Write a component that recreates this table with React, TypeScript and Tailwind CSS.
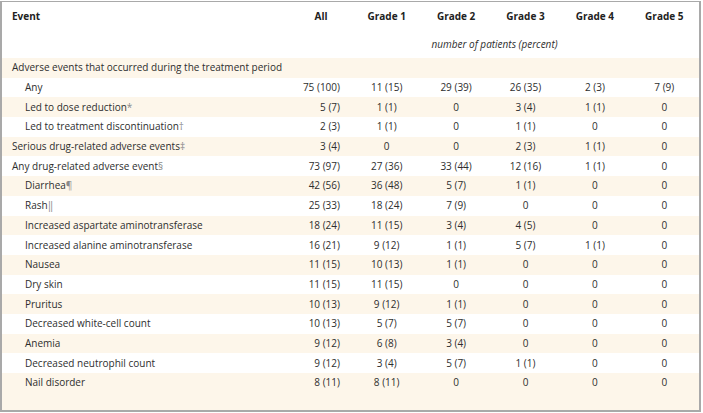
type Row = {
  label: string
  mark?: string
  indent?: boolean
  section?: boolean
  values?: string[]
}

const rows: Row[] = [
  { label: 'Adverse events that occurred during the treatment period', section: true },
  { label: 'Any', indent: true, values: ['75 (100)', '11 (15)', '29 (39)', '26 (35)', '2 (3)', '7 (9)'] },
  { label: 'Led to dose reduction', mark: '*', indent: true, values: ['5 (7)', '1 (1)', '0', '3 (4)', '1 (1)', '0'] },
  { label: 'Led to treatment discontinuation', mark: '†', indent: true, values: ['2 (3)', '1 (1)', '0', '1 (1)', '0', '0'] },
  { label: 'Serious drug-related adverse events', mark: '‡', values: ['3 (4)', '0', '0', '2 (3)', '1 (1)', '0'] },
  { label: 'Any drug-related adverse event', mark: '§', values: ['73 (97)', '27 (36)', '33 (44)', '12 (16)', '1 (1)', '0'] },
  { label: 'Diarrhea', mark: '¶', indent: true, values: ['42 (56)', '36 (48)', '5 (7)', '1 (1)', '0', '0'] },
  { label: 'Rash', mark: '‖', indent: true, values: ['25 (33)', '18 (24)', '7 (9)', '0', '0', '0'] },
  { label: 'Increased aspartate aminotransferase', indent: true, values: ['18 (24)', '11 (15)', '3 (4)', '4 (5)', '0', '0'] },
  { label: 'Increased alanine aminotransferase', indent: true, values: ['16 (21)', '9 (12)', '1 (1)', '5 (7)', '1 (1)', '0'] },
  { label: 'Nausea', indent: true, values: ['11 (15)', '10 (13)', '1 (1)', '0', '0', '0'] },
  { label: 'Dry skin', indent: true, values: ['11 (15)', '11 (15)', '0', '0', '0', '0'] },
  { label: 'Pruritus', indent: true, values: ['10 (13)', '9 (12)', '1 (1)', '0', '0', '0'] },
  { label: 'Decreased white-cell count', indent: true, values: ['10 (13)', '5 (7)', '5 (7)', '0', '0', '0'] },
  { label: 'Anemia', indent: true, values: ['9 (12)', '6 (8)', '3 (4)', '0', '0', '0'] },
  { label: 'Decreased neutrophil count', indent: true, values: ['9 (12)', '3 (4)', '5 (7)', '1 (1)', '0', '0'] },
  { label: 'Nail disorder', indent: true, values: ['8 (11)', '8 (11)', '0', '0', '0', '0'] },
]

const grades = ['Grade 1', 'Grade 2', 'Grade 3', 'Grade 4', 'Grade 5']
const cols = 'grid grid-cols-[288px_62px_repeat(5,1fr)]'

export default function App() {
  return (
    <div className="w-[703px] h-[413px] bg-white pt-px" style={{ fontFamily: '"Open Sans", "Noto Sans", sans-serif' }}>
      <div className="w-[701px] h-[411px] border-2 border-t border-[#a9a9a9] bg-[#fdf6ea] text-[10px] text-[#2e2e2e] flex flex-col">
        {/* header */}
        <div className="bg-white">
          <div className={`${cols} h-[28px] items-center font-bold text-[#222]`}>
            <div className="pl-[10px]">Event</div>
            <div className="text-center">All</div>
            {grades.map(g => (
              <div key={g} className="text-center">{g}</div>
            ))}
          </div>
          <div className={`${cols} h-[28px] items-center`}>
            <div />
            <div className="col-span-6 text-center italic">number of patients (percent)</div>
          </div>
        </div>

        {rows.map((r, i) => (
          <div
            key={r.label}
            className={`${cols} h-[19.7px] items-center ${i % 2 === 0 ? 'bg-[#fdf6ea]' : 'bg-white'}`}
          >
            <div className={`${r.section ? 'col-span-7' : ''} ${r.indent ? 'pl-[23px]' : 'pl-[10px]'} whitespace-nowrap`}>
              {r.label}
              {r.mark && <span className="text-[#8a8a8a]">{r.mark}</span>}
            </div>
            {r.values?.map((v, j) => (
              <div key={j} className={j === 0 ? 'text-right pr-3' : 'text-center'}>
                {v}
              </div>
            ))}
          </div>
        ))}
        <div className="flex-1 bg-[#fdf6ea]" />
      </div>
    </div>
  )
}
